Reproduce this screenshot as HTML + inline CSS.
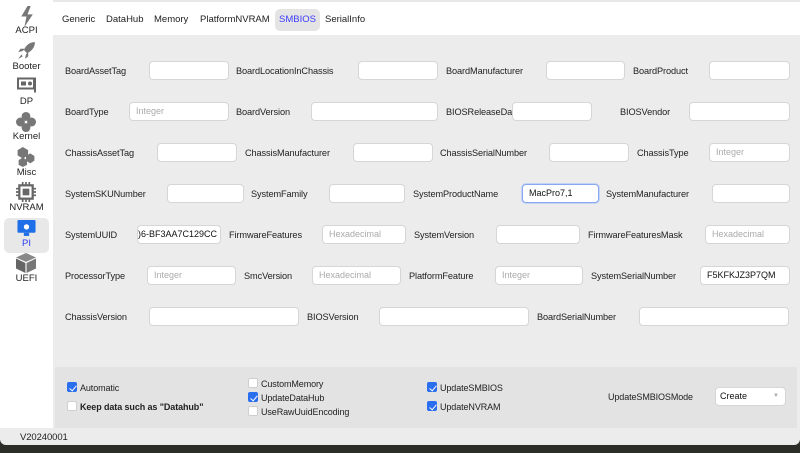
<!DOCTYPE html>
<html><head><meta charset="utf-8"><style>
*{margin:0;padding:0;box-sizing:border-box}
body{width:800px;height:453px;overflow:hidden;background:#2a2e26;font-family:"Liberation Sans",sans-serif;font-size:9.5px;color:#222;position:relative}
.win{position:absolute;left:0;top:0;width:800px;height:445px;background:#ececec;border-radius:0 0 6px 6px}
.side{position:absolute;left:0;top:0;width:53px;height:428px;background:#fff}
.tabs{position:absolute;left:53px;top:2px;width:747px;height:33px;background:#fff}
.top{position:absolute;left:0;top:0;width:800px;height:2px;background:#e8e8e8}
.tab{position:absolute;top:7px;height:22px;line-height:22px;font-size:9.5px;color:#222}
.tab.sel{background:#e4e4e4;border-radius:5px;color:#3b3bff;padding:0 4px}
.l{position:absolute;font-size:9.2px;letter-spacing:-0.1px;color:#222;line-height:12px;white-space:nowrap}
.i{position:absolute;height:19px;background:#fff;border:1px solid #d6d6d6;border-radius:4px;font-size:9px;line-height:17px;padding-left:6px;color:#aaa;overflow:hidden;white-space:nowrap}
.i.v{color:#111}
.bot{position:absolute;left:55px;top:367px;width:742px;height:61px;background:#e3e3e3}
.cb{position:absolute;width:10px;height:10px;border-radius:2px;background:#fff;border:1px solid #cfcfcf}
.cb.on{background:#2a6ef0;border-color:#2a6ef0}
.cb.on::after{content:"";position:absolute;left:2.5px;top:0.5px;width:3px;height:6px;border:solid #fff;border-width:0 1.5px 1.5px 0;transform:rotate(40deg)}
.si{position:absolute;left:0;width:53px;text-align:center;font-size:9.5px;color:#222}
</style></head><body>
<div class="win">
<div class="top"></div>
<div class="side">
 <svg style="position:absolute;left:18px;top:6px" width="17" height="21" viewBox="0 0 16 20"><path d="M9 0L3 10h5l-2 10 8-12H9l3-8z" fill="#777"/></svg>
 <div class="si" style="top:25px">ACPI</div>
 <svg style="position:absolute;left:16px;top:41px" width="20" height="20" viewBox="0 0 18 18"><path d="M17 1c-5 0-8 3-10 7l3 3c4-2 7-5 7-10zM6 9l-4 1 2-3h4zM9 12l-1 4 3-2v-4zM5 12l-3 4 4-2z" fill="#777"/></svg>
 <div class="si" style="top:61px">Booter</div>
 <svg style="position:absolute;left:17px;top:77px" width="20" height="16" viewBox="0 0 20 15"><rect x="1" y="1" width="16" height="10" fill="none" stroke="#666" stroke-width="2"/><rect x="4" y="4" width="5" height="4" fill="#666"/><circle cx="13" cy="6" r="2" fill="#666"/><path d="M18 0v15" stroke="#666" stroke-width="2"/></svg>
 <div class="si" style="top:96px">DP</div>
 <svg style="position:absolute;left:16px;top:112px" width="20" height="20" viewBox="0 0 18 18"><circle cx="9" cy="4" r="4" fill="#777"/><circle cx="9" cy="14" r="4" fill="#777"/><circle cx="4" cy="9" r="4" fill="#777"/><circle cx="14" cy="9" r="4" fill="#777"/></svg>
 <div class="si" style="top:131px">Kernel</div>
 <svg style="position:absolute;left:16px;top:147px" width="20" height="20" viewBox="0 0 18 19"><polygon points="6,0 11,3 11,8 6,11 1,8 1,3" fill="#777"/><polygon points="13,6 17,8.5 17,13 13,15.5 9,13 9,8.5" fill="#777"/><polygon points="6,10 10,12.5 10,17 6,19 2,17 2,12.5" fill="#777"/></svg>
 <div class="si" style="top:167px">Misc</div>
 <svg style="position:absolute;left:16px;top:182px" width="20" height="20" viewBox="0 0 18 18"><rect x="3" y="3" width="12" height="12" fill="none" stroke="#666" stroke-width="2"/><rect x="6" y="6" width="6" height="6" fill="#666"/><path d="M6 0v3M9 0v3M12 0v3M6 15v3M9 15v3M12 15v3M0 6h3M0 9h3M0 12h3M15 6h3M15 9h3M15 12h3" stroke="#666" stroke-width="1.5"/></svg>
 <div class="si" style="top:202px">NVRAM</div>
 <div style="position:absolute;left:4px;top:218px;width:45px;height:35px;background:#e8e8e8;border-radius:5px"></div>
 <svg style="position:absolute;left:17px;top:220px" width="19" height="17" viewBox="0 0 17 16"><rect x="0" y="0" width="17" height="12" rx="1" fill="#1f6fe8"/><rect x="6" y="12" width="5" height="3" fill="#1f6fe8"/><circle cx="8.5" cy="6.5" r="2.5" fill="#fff"/></svg>
 <div class="si" style="top:238px;color:#2a3af5">PI</div>
 <svg style="position:absolute;left:16px;top:253px" width="20" height="20" viewBox="0 0 18 18"><polygon points="9,0 18,4 9,8 0,4" fill="#888"/><polygon points="0,5 8.5,9 8.5,18 0,14" fill="#666"/><polygon points="18,5 9.5,9 9.5,18 18,14" fill="#777"/></svg>
 <div class="si" style="top:273px">UEFI</div>
</div>
<div class="tabs">
 <div class="tab" style="left:9px">Generic</div>
 <div class="tab" style="left:53px">DataHub</div>
 <div class="tab" style="left:101px">Memory</div>
 <div class="tab" style="left:147px">PlatformNVRAM</div>
 <div class="tab sel" style="left:222px">SMBIOS</div>
 <div class="tab" style="left:272px">SerialInfo</div>
</div>

<div class="l" style="left:65px;top:65px">BoardAssetTag</div><div class="i" style="left:149px;top:61px;width:80px"></div>
<div class="l" style="left:236px;top:65px">BoardLocationInChassis</div><div class="i" style="left:358px;top:61px;width:80px"></div>
<div class="l" style="left:446px;top:65px">BoardManufacturer</div><div class="i" style="left:546px;top:61px;width:79px"></div>
<div class="l" style="left:633px;top:65px">BoardProduct</div><div class="i" style="left:709px;top:61px;width:81px"></div>

<div class="l" style="left:65px;top:106px">BoardType</div><div class="i" style="left:129px;top:102px;width:100px">Integer</div>
<div class="l" style="left:236px;top:106px">BoardVersion</div><div class="i" style="left:311px;top:102px;width:127px"></div>
<div class="l" style="left:446px;top:106px">BIOSReleaseDate</div><div class="i" style="left:512px;top:102px;width:80px"></div>
<div class="l" style="left:620px;top:106px">BIOSVendor</div><div class="i" style="left:689px;top:102px;width:101px"></div>

<div class="l" style="left:65px;top:147px">ChassisAssetTag</div><div class="i" style="left:157px;top:143px;width:80px"></div>
<div class="l" style="left:245px;top:147px">ChassisManufacturer</div><div class="i" style="left:353px;top:143px;width:80px"></div>
<div class="l" style="left:440px;top:147px">ChassisSerialNumber</div><div class="i" style="left:549px;top:143px;width:80px"></div>
<div class="l" style="left:637px;top:147px">ChassisType</div><div class="i" style="left:709px;top:143px;width:81px">Integer</div>

<div class="l" style="left:65px;top:188px">SystemSKUNumber</div><div class="i" style="left:167px;top:184px;width:77px"></div>
<div class="l" style="left:251px;top:188px">SystemFamily</div><div class="i" style="left:329px;top:184px;width:76px"></div>
<div class="l" style="left:413px;top:188px">SystemProductName</div><div class="i v" style="left:522px;top:184px;width:77px;border:1.5px solid #8aa8ef;box-shadow:0 0 0 1px #c4d4f7">MacPro7,1</div>
<div class="l" style="left:606px;top:188px">SystemManufacturer</div><div class="i" style="left:712px;top:184px;width:78px"></div>

<div class="l" style="left:65px;top:229px">SystemUUID</div><div class="i v" style="left:137px;top:225px;width:84px;padding-left:0">)6-BF3AA7C129CC</div>
<div class="l" style="left:229px;top:229px">FirmwareFeatures</div><div class="i" style="left:322px;top:225px;width:84px">Hexadecimal</div>
<div class="l" style="left:414px;top:229px">SystemVersion</div><div class="i" style="left:496px;top:225px;width:84px"></div>
<div class="l" style="left:588px;top:229px">FirmwareFeaturesMask</div><div class="i" style="left:705px;top:225px;width:85px">Hexadecimal</div>

<div class="l" style="left:65px;top:270px">ProcessorType</div><div class="i" style="left:147px;top:266px;width:89px">Integer</div>
<div class="l" style="left:244px;top:270px">SmcVersion</div><div class="i" style="left:312px;top:266px;width:89px">Hexadecimal</div>
<div class="l" style="left:409px;top:270px">PlatformFeature</div><div class="i" style="left:495px;top:266px;width:88px">Integer</div>
<div class="l" style="left:591px;top:270px">SystemSerialNumber</div><div class="i v" style="left:700px;top:266px;width:90px">F5KFKJZ3P7QM</div>

<div class="l" style="left:65px;top:311px">ChassisVersion</div><div class="i" style="left:149px;top:307px;width:150px"></div>
<div class="l" style="left:307px;top:311px">BIOSVersion</div><div class="i" style="left:379px;top:307px;width:150px"></div>
<div class="l" style="left:537px;top:311px">BoardSerialNumber</div><div class="i" style="left:639px;top:307px;width:150px"></div>

<div class="bot"></div>
<div class="cb on" style="left:67px;top:382px"></div><div class="l" style="left:80px;top:382px;font-size:9px">Automatic</div>
<div class="cb" style="left:67px;top:401px"></div><div class="l" style="left:80px;top:401px;font-size:9px;font-weight:bold">Keep data such as "Datahub"</div>
<div class="cb" style="left:248px;top:378px"></div><div class="l" style="left:261px;top:378px;font-size:9px">CustomMemory</div>
<div class="cb on" style="left:248px;top:392px"></div><div class="l" style="left:261px;top:392px;font-size:9px">UpdateDataHub</div>
<div class="cb" style="left:248px;top:406px"></div><div class="l" style="left:261px;top:406px;font-size:9px">UseRawUuidEncoding</div>
<div class="cb on" style="left:427px;top:382px"></div><div class="l" style="left:440px;top:382px;font-size:9px">UpdateSMBIOS</div>
<div class="cb on" style="left:427px;top:401px"></div><div class="l" style="left:440px;top:401px;font-size:9px">UpdateNVRAM</div>
<div class="l" style="left:608px;top:391px;font-size:9px">UpdateSMBIOSMode</div>
<div class="i v" style="left:715px;top:387px;width:71px;height:19px;font-size:9px;padding-left:4px">Create<span style="position:absolute;right:6px;color:#aaa;font-size:6px">▼</span></div>

<div class="l" style="left:20px;top:432px;font-size:9.5px">V20240001</div>
</div>
</body></html>
